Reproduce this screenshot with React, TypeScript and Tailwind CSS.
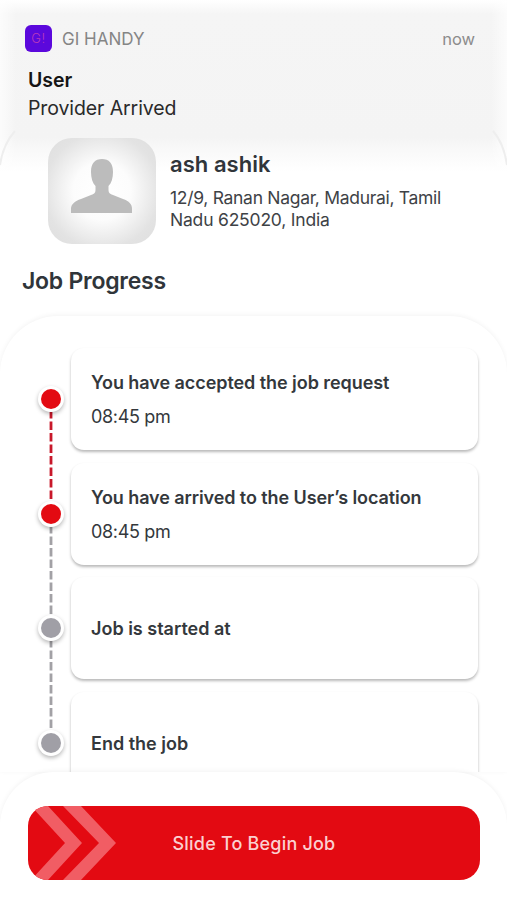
type Step = { title: string; time?: string; done: boolean; line?: string };

const steps: Step[] = [
  { title: "You have accepted the job request", time: "08:45 pm", done: true, line: "#c8182a" },
  { title: "You have arrived to the User’s location", time: "08:45 pm", done: true, line: "#a2a1a5" },
  { title: "Job is started at", done: false, line: "#a2a1a5" },
  { title: "End the job", done: false },
];

const tracking = [
  "tracking-[-0.06px]",
  "tracking-[-0.09px]",
  "tracking-[0px]",
  "tracking-[0px]",
];

function Notification() {
  return (
    <section className="absolute inset-x-0 top-0 h-[172px] bg-[linear-gradient(to_bottom,#ffffff_0px,#f5f5f5_14px,#f4f4f4_138px,#f8f8f8_147px,#ffffff_172px)] font-['Inter',sans-serif]">
      <div className="flex items-start pt-[25px] pr-8 pl-[25px]">
        <div className="flex size-[27px] items-center justify-center rounded-[6px] bg-[#5b08dc]">
          <span className="text-[13px] leading-none font-light tracking-[0.5px] text-[#b838bd]">G!</span>
        </div>
        <span className="mt-px ml-[10px] text-[17px] leading-[27px] text-[#858585]">GI HANDY</span>
        <span className="mt-px ml-auto text-[16.5px] leading-[27px] text-[#8c8c8c]">now</span>
      </div>
      <div className="pt-[13px] pl-7 text-[19.5px] leading-7 text-[#2a2a2a]">
        <p className="font-semibold text-[#151515]">User</p>
        <p className="tracking-[-0.1px]">Provider Arrived</p>
      </div>
      <div className="absolute inset-y-0 left-0 w-4 bg-gradient-to-r from-white/70 to-transparent" />
      <div className="absolute inset-y-0 right-0 w-4 bg-gradient-to-l from-white/70 to-transparent" />
      <svg className="absolute top-[128px] left-0" width="507" height="44" fill="none" stroke="#eeeeee" strokeWidth="2">
        <path d="M15 3C7 12 2 23 0 37M493 3c8 9 12 20 14 34" />
      </svg>
    </section>
  );
}

function Avatar() {
  return (
    <div className="h-[106px] w-[108px] shrink-0 overflow-hidden rounded-[24px] bg-[radial-gradient(circle,#ffffff_0%,#fcfcfc_38%,#e3e3e3_76%,#dedede_100%)]">
      <svg width="108" height="106" viewBox="0 0 108 106" fill="#bcbcbc">
        <path d="M23 75v-4c0-5 4-8 10-10l10-4c3-1 4.500-2 4.500-5v-4c-3-3-4.500-8-4.500-14 0-9 4-13 11-13s11 4 11 13c0 6-1.500 11-4.500 14v4c0 3 1.500 4 4.500 5l10 4c6 2 9 5 9 10v4Z" />
      </svg>
    </div>
  );
}

function TimelineStep({ step, index }: { step: Step; index: number }) {
  return (
    <li className="flex h-[102px] shrink-0 items-center">
      <div className="relative flex w-[33.5px] shrink-0">
        {step.line && (
          <svg className="absolute top-[26px] left-[10px]" width="6" height="90">
            <line x1="3" y1="0" x2="3" y2="89" stroke={step.line} strokeWidth="2.8" strokeDasharray="8.5 3" strokeDashoffset="2" />
          </svg>
        )}
        <div className="relative flex size-[26px] items-center justify-center rounded-full bg-white shadow-[0_2px_4px_rgba(0,0,0,0.28)]">
          <span className={step.done ? "size-[20px] rounded-full bg-[#e30a12]" : "size-[20px] rounded-full bg-[#a09fa6]"} />
        </div>
      </div>
      <div className="flex h-[102px] flex-1 flex-col justify-center gap-[10px] rounded-[13px] bg-white pt-[2px] pl-5 text-[#34383c] shadow-[0_2px_3px_rgba(0,0,0,0.28)]">
        <p className={"text-[18px] leading-6 font-semibold whitespace-nowrap " + tracking[index]}>{step.title}</p>
        {step.time && <p className="text-[18px] leading-6 tracking-[-0.35px]">{step.time}</p>}
      </div>
    </li>
  );
}

export default function App() {
  return (
    <main className="relative flex h-[900px] w-[507px] flex-col overflow-hidden bg-white font-['Inter',sans-serif] text-[#30353a]">
      <Notification />

      <header className="relative flex pt-[138px] pl-12">
        <Avatar />
        <div className="pt-[11px] pl-[14px]">
          <h1 className="text-[22px] leading-[30px] font-semibold tracking-[0.05px]">ash ashik</h1>
          <p className="mt-[8px] text-[17.5px] leading-[22px] tracking-[-0.3px] text-[#3e4246]">
            12/9, Ranan Nagar, Madurai, Tamil
            <br />
            <span className="tracking-[-0.2px]">Nadu 625020, India</span>
          </p>
        </div>
      </header>

      <h2 className="mt-[21px] pl-[22px] text-[23px] leading-8 font-semibold tracking-[-0.25px]">Job Progress</h2>

      <section className="mt-[19px] h-[456px] shrink-0 overflow-hidden rounded-t-[58px] bg-white pt-[32px] pr-[29.5px] pl-[37.5px] shadow-[0_-1px_5px_rgba(0,0,0,0.05)]">
        <ol className="flex flex-col gap-[12.6px]">
          {steps.map((step, i) => (
            <TimelineStep key={step.title} step={step} index={i} />
          ))}
        </ol>
      </section>

      <footer className="relative h-[128px] shrink-0 rounded-t-[54px] bg-white pt-[34px] pr-[27px] pl-7 shadow-[0_-1px_5px_rgba(0,0,0,0.05)]">
        <button className="relative flex h-[74px] w-full items-center justify-center overflow-hidden rounded-[20px] bg-[#e30a12]">
          <svg className="absolute top-0 left-0" width="92" height="74" fill="#f15d64">
            <path d="M3 0h17l34 37-34 37H3l34-37Z" />
            <path d="M35 0h18l35 37-35 37H35l36-37Z" />
          </svg>
          <span className="text-[18px] font-medium tracking-[0.2px] text-[#fbd0d0]">Slide To Begin Job</span>
        </button>
      </footer>
    </main>
  );
}
